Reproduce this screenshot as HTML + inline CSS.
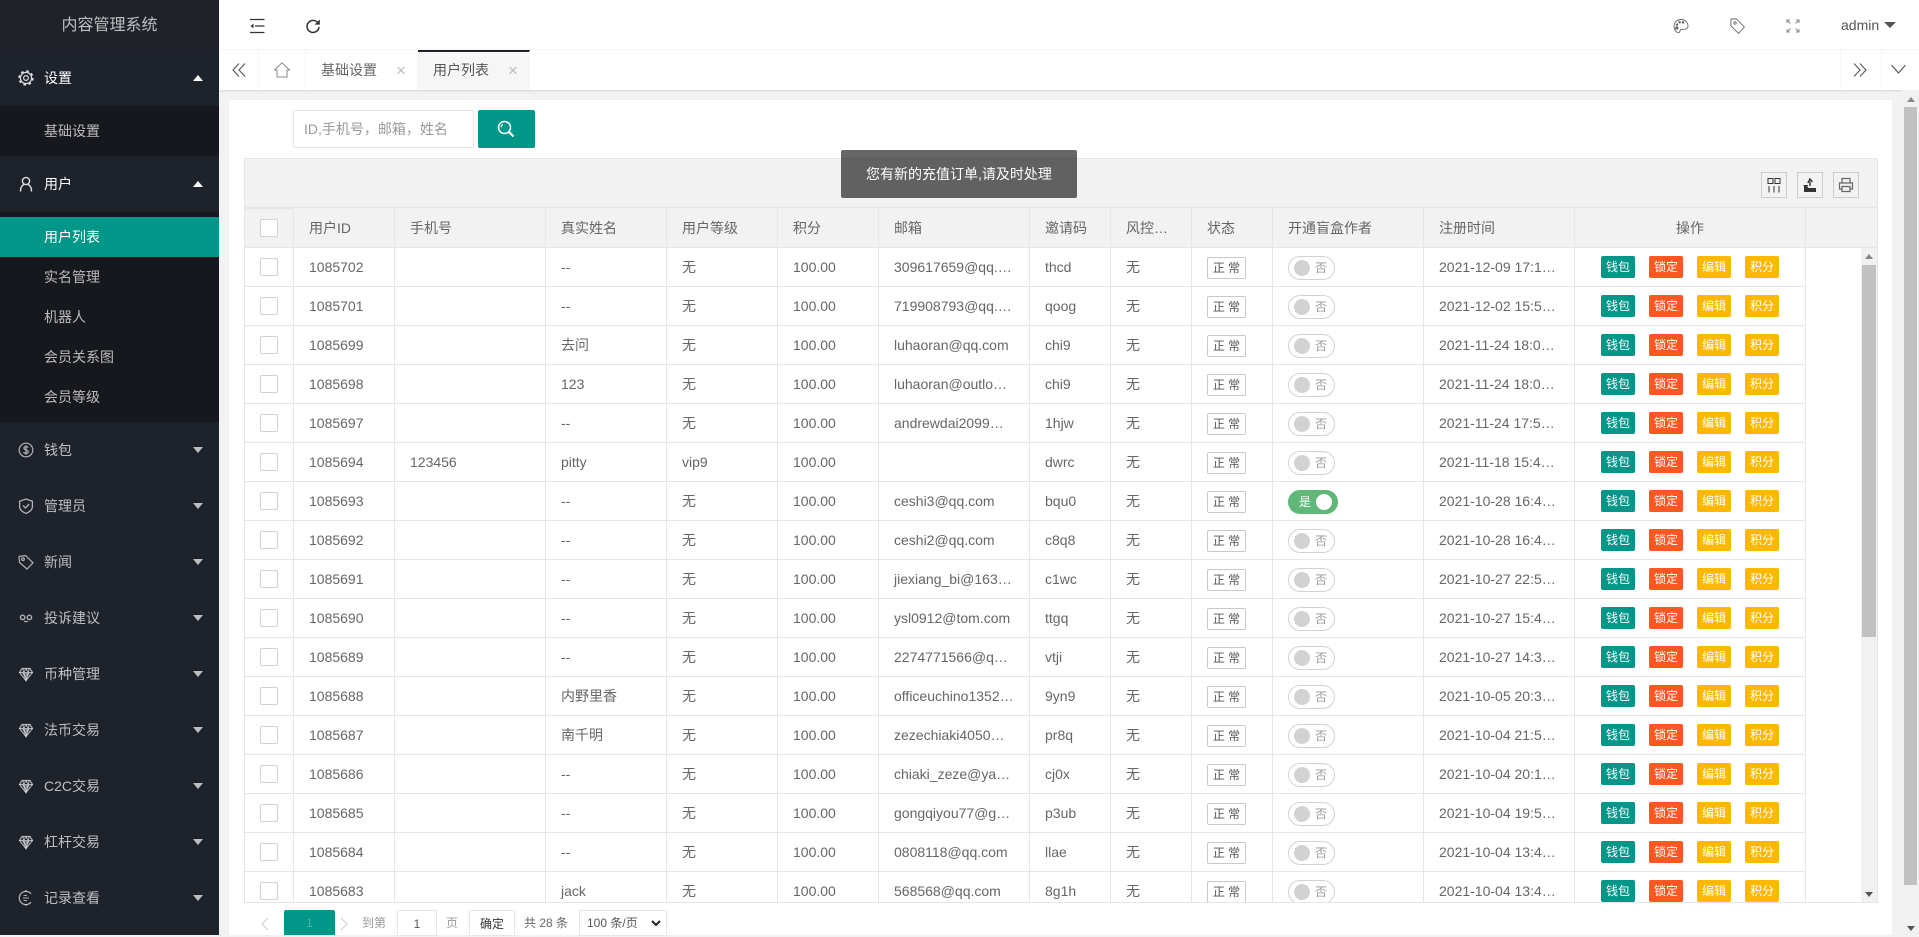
<!DOCTYPE html>
<html lang="zh"><head><meta charset="utf-8"><title>内容管理系统</title>
<style>
*{box-sizing:border-box}
html,body{margin:0;padding:0;width:1919px;height:935px;overflow:hidden;background:#f2f2f2;font:14px/20px "Liberation Sans","Noto Sans CJK SC",sans-serif;color:#666}
.a{position:absolute}
#side{position:absolute;left:0;top:0;width:219px;height:935px;background:#1e222b;color:rgba(255,255,255,.7)}
#side .title{position:absolute;left:0;top:0;width:219px;height:50px;line-height:51px;text-align:center;font-size:16px;background:#20222a}
.m{position:absolute;left:0;width:219px;height:56px;line-height:56px;padding-left:44px}
.m.on{color:#fff}
.m svg{position:absolute;left:18px;top:20px;width:16px;height:16px;fill:none;stroke:rgba(255,255,255,.65);stroke-width:1.2}
.m.on svg{stroke:rgba(255,255,255,.85)}
.m:after{content:"";position:absolute;left:193px;top:25px;border-left:5.5px solid transparent;border-right:5.5px solid transparent;border-top:6px solid rgba(255,255,255,.7)}
.m.on:after{border-top:0;border-bottom:6px solid #fff}
.ch{position:absolute;left:0;width:219px;background:#17181d}
.ch div{height:40px;line-height:40px;padding-left:44px}
.ch div.act{background:#009688;color:#fff}
#top{position:absolute;left:219px;top:0;width:1700px;height:50px;background:#fff;border-bottom:1px solid #f6f6f6}
#tabs{position:absolute;left:219px;top:50px;width:1700px;height:40px;background:#fff;box-shadow:0 1px 2px rgba(0,0,0,.12)}
#tabs .c{position:absolute;top:0;height:40px;border-right:1px solid #f6f6f6}
#tabs .l{position:absolute;top:9px;line-height:22px}
#tabs .x{position:absolute;top:10px;line-height:22px;color:#bbb;font-size:17px}
#card{position:absolute;left:229px;top:100px;width:1663px;height:835px;background:#fff}
#sb{position:absolute;left:1902px;top:90px;width:17px;height:845px;background:#f1f1f1}
table{border-collapse:separate;border-spacing:0;table-layout:fixed;position:absolute;left:245px;width:1561px}
td,th{height:39px;padding:0 15px;border-right:1px solid #e6e6e6;border-bottom:1px solid #e6e6e6;font-weight:400;text-align:left;white-space:nowrap;overflow:hidden;vertical-align:middle;color:#666;line-height:20px}
th{height:39px;background:#f2f2f2}
td:first-child,th:first-child{padding:0}
i.c{display:block;width:18px;height:18px;margin:0 auto;border:1px solid #d2d2d2;border-radius:2px;background:#fff}
b.s{display:inline-block;height:22px;border:1px solid #c9c9c9;border-radius:2px;font:12px/21px "Liberation Sans","Noto Sans CJK SC",sans-serif;color:#555;text-align:center;position:relative;top:1px;width:39px}
u.t{display:inline-block;position:relative;top:1px;width:47px;height:24px;border:1px solid #d2d2d2;border-radius:20px;text-decoration:none;vertical-align:middle}
u.t i{position:absolute;left:5px;top:3px;width:16px;height:16px;border-radius:50%;background:#d2d2d2}
u.t em{position:absolute;left:26px;top:0;font:12px/22px "Liberation Sans","Noto Sans CJK SC",sans-serif;color:#999}
u.t.y{width:50px;background:#5fb878;border-color:#5fb878}
u.t.y i{left:27px;background:#fff}
u.t.y em{left:10px;color:#fff}
td.o{padding:0;text-align:center;font-size:0}
td.o span{display:inline-block;width:34px;height:22px;margin:0 7px;border-radius:2px;font:12px/22px "Liberation Sans","Noto Sans CJK SC",sans-serif;color:#fff;text-align:center;position:relative;top:1px}
.g{background:#009688}.r{background:#ff5722}.h{background:#ffb800}
.ti{position:absolute;top:172px;width:26px;height:26px;border:1px solid #ccc;background:#f2f2f2}
.ti svg{position:absolute;left:4px;top:4px;width:16px;height:16px}
.p{position:absolute;top:913px;font-size:12px;line-height:20px;color:#999}
.ar{position:absolute;width:0;height:0;border-left:4px solid transparent;border-right:4px solid transparent}
</style></head><body>
<svg width="0" height="0" style="position:absolute"><defs>
<symbol id="dia" viewBox="0 0 16 16"><path d="M4 2.5H12L14.5 6.5 8 14.5 1.5 6.5Z"/><path d="M1.5 6.5H14.5M5.5 6.5 8 14.5 10.5 6.5M5 2.5 5.5 6.5 8 3 10.5 6.5 11 2.5" stroke-width="1"/><path d="M4 7h8L8 13Z" fill="rgba(255,255,255,.45)" stroke="none"/></symbol>
</defs></svg>

<div id="side">
<div class="title">内容管理系统</div>
<div class="m on" style="top:50px"><svg viewBox="0 0 16 16" style="top:20px"><circle cx="8" cy="8" r="5.6" stroke-width="1.2"/><circle cx="8" cy="8" r="6.9" stroke-width="1.6" stroke-dasharray="2.6 2.82"/><circle cx="8" cy="8" r="2.4"/></svg>设置</div>
<div class="ch" style="top:106px;height:50px;padding-top:5px"><div>基础设置</div></div>
<div class="m on" style="top:156px"><svg viewBox="0 0 16 16"><circle cx="8" cy="5" r="3.6" stroke-width="1.4"/><path d="M2.5 15.5C2.5 11 4.5 8.8 6.2 8.4M13.5 15.5C13.5 11 11.5 8.8 9.8 8.4" stroke-width="1.4"/></svg>用户</div>
<div class="ch" style="top:212px;height:210px;padding-top:5px"><div class="act">用户列表</div><div>实名管理</div><div>机器人</div><div>会员关系图</div><div>会员等级</div></div>
<div class="m" style="top:422px"><svg viewBox="0 0 16 16"><circle cx="8" cy="8" r="6.8"/><path d="M10.4 5.6C9.6 4.4 6 4.2 5.9 6.1 5.8 8.2 10.4 7.4 10.3 9.8 10.2 11.8 6.2 11.6 5.5 10.2M8 3.2V12.8"/></svg>钱包</div>
<div class="m" style="top:478px"><svg viewBox="0 0 16 16"><path d="M8 1 14.4 3.2V8.5C14.4 12 11 14.2 8 15.4 5 14.2 1.6 12 1.6 8.5V3.2Z" stroke-width="1.3"/><path d="M5 7.4 7.5 10 11.2 6" stroke-width="1.3"/></svg>管理员</div>
<div class="m" style="top:534px"><svg viewBox="0 0 16 16"><path d="M1 2.5 7.5 1.5 15 8.8 9 15 1.6 8.6Z" stroke-width="1.2"/><circle cx="5" cy="5.2" r="1.3"/></svg>新闻</div>
<div class="m" style="top:590px"><svg viewBox="0 0 16 16"><circle cx="4.6" cy="7.4" r="2.2" stroke-width="1.4"/><circle cx="11.4" cy="7.4" r="2.2" stroke-width="1.4"/><path d="M6 11.5H10" stroke-width="1.2"/></svg>投诉建议</div>
<div class="m" style="top:646px"><svg viewBox="0 0 16 16"><use href="#dia"/></svg>币种管理</div>
<div class="m" style="top:702px"><svg viewBox="0 0 16 16"><use href="#dia"/></svg>法币交易</div>
<div class="m" style="top:758px"><svg viewBox="0 0 16 16"><use href="#dia"/></svg>C2C交易</div>
<div class="m" style="top:814px"><svg viewBox="0 0 16 16"><use href="#dia"/></svg>杠杆交易</div>
<div class="m" style="top:870px"><svg viewBox="0 0 16 16"><path d="M13 3.8A6.6 6.6 0 1 0 13 12.2" stroke-width="1.3"/><path d="M5 8H11M5.6 5.5H9M5.6 10.5H9" stroke-width="1"/><path d="M8 .2V2M8 14V15.8" stroke-width="1.3"/></svg>记录查看</div>
</div>

<div id="top">
<svg class="a" style="left:30px;top:18px" width="16" height="16" viewBox="0 0 16 16" fill="none" stroke="#333" stroke-width="1.2"><path d="M1 1.5H15.5M6 8H15.5M1 14.5H15.5"/><path d="M4.5 5.6 1.5 8 4.5 10.4Z" fill="#333" stroke="none"/></svg>
<svg class="a" style="left:86px;top:18px" width="16" height="16" viewBox="0 0 16 16" fill="none" stroke="#333" stroke-width="1.5"><path d="M13.6 6.2A6 6 0 1 0 14 9"/><path d="M14.8 1.4V6.6H9.6Z" fill="#333" stroke="none"/></svg>
<svg class="a" style="left:1454px;top:18px" width="16" height="16" viewBox="0 0 16 16" fill="none" stroke="#666" stroke-width=".9"><path d="M8 1.5C4 1.5 1 4.4 1 8.2 1 12 3.6 14.7 5.6 14.7 7.4 14.7 6.4 12 8 11.6 9.8 11.2 15 12 15 8 15 4.4 12 1.5 8 1.5Z"/><circle cx="4" cy="6.6" r=".8" fill="#666"/><circle cx="6.6" cy="4.2" r=".8" fill="#666"/><circle cx="10" cy="4.4" r=".8" fill="#666"/><circle cx="3.8" cy="10" r="1.2" fill="#666"/></svg>
<svg class="a" style="left:1510px;top:18px" width="16" height="16" viewBox="0 0 16 16" fill="none" stroke="#666" stroke-width=".9"><path d="M2 1 7.5 .9 15.4 9 9.5 15.4 1.8 7.6Z"/><circle cx="6" cy="5" r="1.2"/></svg>
<svg class="a" style="left:1567px;top:19px" width="14" height="14" viewBox="0 0 14 14" fill="none" stroke="#888" stroke-width="1"><path d="M1 4V1H4M1 1 4.5 4.5M13 4V1H10M13 1 9.5 4.5M1 10V13H4M1 13 4.5 9.5M13 10V13H10M13 13 9.5 9.5"/></svg>
<div class="a" style="left:1622px;top:15px;color:#555;font-size:14px">admin</div>
<div class="a" style="left:1665px;top:22px;border-left:6px solid transparent;border-right:6px solid transparent;border-top:6px solid #555"></div>
</div>

<div id="tabs">
<div class="c" style="left:0;width:40px"><svg class="a" style="left:13px;top:13px" width="14" height="14" viewBox="0 0 14 14" fill="none" stroke="#555" stroke-width="1.1"><path d="M7 .5 1 7 7 13.5M13 .5 7 7 13 13.5"/></svg></div>
<div class="c" style="left:40px;width:47px"><svg class="a" style="left:15px;top:12px" width="16" height="16" viewBox="0 0 16 16" fill="none" stroke="#888" stroke-width="1"><path d="M.5 8 8 .8 15.5 8H13V15H3V8Z"/></svg></div>
<div class="c" style="left:87px;width:112px"><span class="l" style="left:15px">基础设置</span><span class="x" style="left:90px">×</span></div>
<div class="c" style="left:199px;width:112px;background:#f6f6f6;border-top:2px solid #20222a"><span class="l" style="left:15px;top:7px;color:#555">用户列表</span><span class="x" style="left:90px;top:8px">×</span></div>
<div class="c" style="left:1621px;width:42px;border-left:1px solid #f6f6f6"><svg class="a" style="left:12px;top:13px" width="14" height="14" viewBox="0 0 14 14" fill="none" stroke="#555" stroke-width="1.1"><path d="M1 .5 7 7 1 13.5M7 .5 13 7 7 13.5"/></svg></div>
<svg class="a" style="left:1672px;top:14px" width="15" height="10" viewBox="0 0 15 10" fill="none" stroke="#555" stroke-width="1.1"><path d="M.5 1 7.5 9 14.5 1"/></svg>
</div>

<div id="card"></div>

<div class="a" style="left:293px;top:110px;width:181px;height:38px;border:1px solid #e6e6e6;border-radius:2px;background:#fff;line-height:36px;padding-left:10px;color:#999">ID,手机号，邮箱，姓名</div>
<div class="a" style="left:478px;top:110px;width:57px;height:38px;background:#009688;border-radius:2px"><svg class="a" style="left:19px;top:10px" width="18" height="18" viewBox="0 0 18 18" fill="none" stroke="#fff" stroke-width="1.5"><circle cx="7.5" cy="7.5" r="6"/><path d="M12 12 16.5 16.5" stroke-width="2.2"/><path d="M4 7.5A3.5 3.5 0 0 1 6 4.5" stroke-width="1"/></svg></div>

<div class="a" style="left:244px;top:158px;width:1634px;height:745px;border:1px solid #e6e6e6;border-bottom:0"></div>
<div class="a" style="left:245px;top:159px;width:1632px;height:49px;background:#f2f2f2;border-bottom:1px solid #e6e6e6"></div>
<div class="ti" style="left:1761px"><svg viewBox="0 0 16 16" fill="none" stroke="#333" stroke-width="1"><path d="M2 1.5H7V6.5H2ZM9 1.5H14V6.5H9ZM3 9V15.5M8 9V15.5M13 9V15.5"/></svg></div>
<div class="ti" style="left:1797px"><svg viewBox="0 0 16 16"><path d="M2 9H5L6.5 11H14V15H2Z" fill="#333"/><path d="M8 9V4.5M5.8 6 8 2 10.5 5" fill="none" stroke="#333" stroke-width="1.4"/><path d="M1.5 8.5H6" stroke="#333"/></svg></div>
<div class="ti" style="left:1833px"><svg viewBox="0 0 16 16" fill="none" stroke="#666" stroke-width="1.2"><path d="M4 6V1.5H12V6M4 12H1.5V6H14.5V12H12"/><path d="M4 9.5H12V14.5H4Z"/></svg></div>

<table style="top:208px;width:1632px;border-top:0">
<colgroup><col width="49"><col width="101"><col width="151"><col width="121"><col width="111"><col width="101"><col width="151"><col width="81"><col width="81"><col width="81"><col width="151"><col width="151"><col width="231"><col width="71"></colgroup>
<tr><th style="border-top:1px solid #e6e6e6;height:40px"><i class="c"></i></th><th>用户ID</th><th>手机号</th><th>真实姓名</th><th>用户等级</th><th>积分</th><th>邮箱</th><th>邀请码</th><th>风控…</th><th>状态</th><th>开通盲盒作者</th><th>注册时间</th><th style="text-align:center">操作</th><th style="border-right:0"></th></tr>
</table>

<div class="a" style="left:245px;top:248px;width:1632px;height:654px;overflow:hidden">
<table style="left:0;top:0;width:1561px">
<colgroup><col width="49"><col width="101"><col width="151"><col width="121"><col width="111"><col width="101"><col width="151"><col width="81"><col width="81"><col width="81"><col width="151"><col width="151"><col width="231"></colgroup>
<tr><td><i class="c"></i></td><td>1085702</td><td></td><td>--</td><td>无</td><td>100.00</td><td>309617659@qq.…</td><td>thcd</td><td>无</td><td><b class="s">正 常</b></td><td><u class="t"><i></i><em>否</em></u></td><td>2021-12-09 17:1…</td><td class="o"><span class="g">钱包</span><span class="r">锁定</span><span class="h">编辑</span><span class="h">积分</span></td></tr>
<tr><td><i class="c"></i></td><td>1085701</td><td></td><td>--</td><td>无</td><td>100.00</td><td>719908793@qq.…</td><td>qoog</td><td>无</td><td><b class="s">正 常</b></td><td><u class="t"><i></i><em>否</em></u></td><td>2021-12-02 15:5…</td><td class="o"><span class="g">钱包</span><span class="r">锁定</span><span class="h">编辑</span><span class="h">积分</span></td></tr>
<tr><td><i class="c"></i></td><td>1085699</td><td></td><td>去问</td><td>无</td><td>100.00</td><td>luhaoran@qq.com</td><td>chi9</td><td>无</td><td><b class="s">正 常</b></td><td><u class="t"><i></i><em>否</em></u></td><td>2021-11-24 18:0…</td><td class="o"><span class="g">钱包</span><span class="r">锁定</span><span class="h">编辑</span><span class="h">积分</span></td></tr>
<tr><td><i class="c"></i></td><td>1085698</td><td></td><td>123</td><td>无</td><td>100.00</td><td>luhaoran@outlo…</td><td>chi9</td><td>无</td><td><b class="s">正 常</b></td><td><u class="t"><i></i><em>否</em></u></td><td>2021-11-24 18:0…</td><td class="o"><span class="g">钱包</span><span class="r">锁定</span><span class="h">编辑</span><span class="h">积分</span></td></tr>
<tr><td><i class="c"></i></td><td>1085697</td><td></td><td>--</td><td>无</td><td>100.00</td><td>andrewdai2099…</td><td>1hjw</td><td>无</td><td><b class="s">正 常</b></td><td><u class="t"><i></i><em>否</em></u></td><td>2021-11-24 17:5…</td><td class="o"><span class="g">钱包</span><span class="r">锁定</span><span class="h">编辑</span><span class="h">积分</span></td></tr>
<tr><td><i class="c"></i></td><td>1085694</td><td>123456</td><td>pitty</td><td>vip9</td><td>100.00</td><td></td><td>dwrc</td><td>无</td><td><b class="s">正 常</b></td><td><u class="t"><i></i><em>否</em></u></td><td>2021-11-18 15:4…</td><td class="o"><span class="g">钱包</span><span class="r">锁定</span><span class="h">编辑</span><span class="h">积分</span></td></tr>
<tr><td><i class="c"></i></td><td>1085693</td><td></td><td>--</td><td>无</td><td>100.00</td><td>ceshi3@qq.com</td><td>bqu0</td><td>无</td><td><b class="s">正 常</b></td><td><u class="t y"><i></i><em>是</em></u></td><td>2021-10-28 16:4…</td><td class="o"><span class="g">钱包</span><span class="r">锁定</span><span class="h">编辑</span><span class="h">积分</span></td></tr>
<tr><td><i class="c"></i></td><td>1085692</td><td></td><td>--</td><td>无</td><td>100.00</td><td>ceshi2@qq.com</td><td>c8q8</td><td>无</td><td><b class="s">正 常</b></td><td><u class="t"><i></i><em>否</em></u></td><td>2021-10-28 16:4…</td><td class="o"><span class="g">钱包</span><span class="r">锁定</span><span class="h">编辑</span><span class="h">积分</span></td></tr>
<tr><td><i class="c"></i></td><td>1085691</td><td></td><td>--</td><td>无</td><td>100.00</td><td>jiexiang_bi@163…</td><td>c1wc</td><td>无</td><td><b class="s">正 常</b></td><td><u class="t"><i></i><em>否</em></u></td><td>2021-10-27 22:5…</td><td class="o"><span class="g">钱包</span><span class="r">锁定</span><span class="h">编辑</span><span class="h">积分</span></td></tr>
<tr><td><i class="c"></i></td><td>1085690</td><td></td><td>--</td><td>无</td><td>100.00</td><td>ysl0912@tom.com</td><td>ttgq</td><td>无</td><td><b class="s">正 常</b></td><td><u class="t"><i></i><em>否</em></u></td><td>2021-10-27 15:4…</td><td class="o"><span class="g">钱包</span><span class="r">锁定</span><span class="h">编辑</span><span class="h">积分</span></td></tr>
<tr><td><i class="c"></i></td><td>1085689</td><td></td><td>--</td><td>无</td><td>100.00</td><td>2274771566@q…</td><td>vtji</td><td>无</td><td><b class="s">正 常</b></td><td><u class="t"><i></i><em>否</em></u></td><td>2021-10-27 14:3…</td><td class="o"><span class="g">钱包</span><span class="r">锁定</span><span class="h">编辑</span><span class="h">积分</span></td></tr>
<tr><td><i class="c"></i></td><td>1085688</td><td></td><td>内野里香</td><td>无</td><td>100.00</td><td>officeuchino1352…</td><td>9yn9</td><td>无</td><td><b class="s">正 常</b></td><td><u class="t"><i></i><em>否</em></u></td><td>2021-10-05 20:3…</td><td class="o"><span class="g">钱包</span><span class="r">锁定</span><span class="h">编辑</span><span class="h">积分</span></td></tr>
<tr><td><i class="c"></i></td><td>1085687</td><td></td><td>南千明</td><td>无</td><td>100.00</td><td>zezechiaki4050…</td><td>pr8q</td><td>无</td><td><b class="s">正 常</b></td><td><u class="t"><i></i><em>否</em></u></td><td>2021-10-04 21:5…</td><td class="o"><span class="g">钱包</span><span class="r">锁定</span><span class="h">编辑</span><span class="h">积分</span></td></tr>
<tr><td><i class="c"></i></td><td>1085686</td><td></td><td>--</td><td>无</td><td>100.00</td><td>chiaki_zeze@ya…</td><td>cj0x</td><td>无</td><td><b class="s">正 常</b></td><td><u class="t"><i></i><em>否</em></u></td><td>2021-10-04 20:1…</td><td class="o"><span class="g">钱包</span><span class="r">锁定</span><span class="h">编辑</span><span class="h">积分</span></td></tr>
<tr><td><i class="c"></i></td><td>1085685</td><td></td><td>--</td><td>无</td><td>100.00</td><td>gongqiyou77@g…</td><td>p3ub</td><td>无</td><td><b class="s">正 常</b></td><td><u class="t"><i></i><em>否</em></u></td><td>2021-10-04 19:5…</td><td class="o"><span class="g">钱包</span><span class="r">锁定</span><span class="h">编辑</span><span class="h">积分</span></td></tr>
<tr><td><i class="c"></i></td><td>1085684</td><td></td><td>--</td><td>无</td><td>100.00</td><td>0808118@qq.com</td><td>llae</td><td>无</td><td><b class="s">正 常</b></td><td><u class="t"><i></i><em>否</em></u></td><td>2021-10-04 13:4…</td><td class="o"><span class="g">钱包</span><span class="r">锁定</span><span class="h">编辑</span><span class="h">积分</span></td></tr>
<tr><td><i class="c"></i></td><td>1085683</td><td></td><td>jack</td><td>无</td><td>100.00</td><td>568568@qq.com</td><td>8g1h</td><td>无</td><td><b class="s">正 常</b></td><td><u class="t"><i></i><em>否</em></u></td><td>2021-10-04 13:4…</td><td class="o"><span class="g">钱包</span><span class="r">锁定</span><span class="h">编辑</span><span class="h">积分</span></td></tr>
</table>
<div class="a" style="left:1616px;top:0;width:16px;height:654px;background:#f1f1f1">
<div class="a" style="left:1px;top:17px;width:14px;height:372px;background:#c1c1c1"></div>
<div class="ar" style="left:4px;top:6px;border-bottom:5px solid #888"></div>
<div class="ar" style="left:4px;top:644px;border-top:5px solid #555"></div>
</div>
</div>
<div class="a" style="left:245px;top:902px;width:1632px;height:1px;background:#e6e6e6"></div>

<svg class="a" style="left:260px;top:917px" width="10" height="14" viewBox="0 0 10 14" fill="none" stroke="#d2d2d2" stroke-width="1.2"><path d="M8 1 2 7 8 13"/></svg>
<div class="a" style="left:284px;top:910px;width:51px;height:25px;background:#009688;border-radius:2px 2px 0 0;color:#4fb5ab;text-align:center;line-height:26px;font-size:12px">1</div>
<svg class="a" style="left:339px;top:917px" width="10" height="14" viewBox="0 0 10 14" fill="none" stroke="#d2d2d2" stroke-width="1.2"><path d="M2 1 8 7 2 13"/></svg>
<div class="p" style="left:362px">到第</div>
<div class="a" style="left:397px;top:910px;width:40px;height:26px;border:1px solid #e6e6e6;text-align:center;font-size:12px;line-height:26px;color:#555">1</div>
<div class="p" style="left:446px">页</div>
<div class="a" style="left:469px;top:910px;width:46px;height:26px;border:1px solid #e6e6e6;text-align:center;font-size:12px;line-height:26px;color:#333">确定</div>
<div class="p" style="left:524px;color:#666">共 28 条</div>
<div class="a" style="left:579px;top:910px;width:88px;height:26px;border:1px solid #e6e6e6;font-size:12px;line-height:24px;padding-left:7px;color:#555">100 条/页<svg class="a" style="left:71px;top:9px" width="10" height="7" viewBox="0 0 10 7" fill="none" stroke="#222" stroke-width="2"><path d="M1 1 5 5 9 1"/></svg></div>

<div class="a" style="left:841px;top:150px;width:236px;height:48px;background:rgba(0,0,0,.6);border-radius:2px;color:#fff;text-align:center;line-height:48px;white-space:nowrap">您有新的充值订单,请及时处理</div>

<div id="sb">
<div class="a" style="left:2px;top:17px;width:13px;height:778px;background:#c1c1c1"></div>
<div class="ar" style="left:5px;top:7px;border-bottom:5px solid #888"></div>
<div class="ar" style="left:5px;top:836px;border-top:5px solid #555"></div>
</div>
</body></html>
